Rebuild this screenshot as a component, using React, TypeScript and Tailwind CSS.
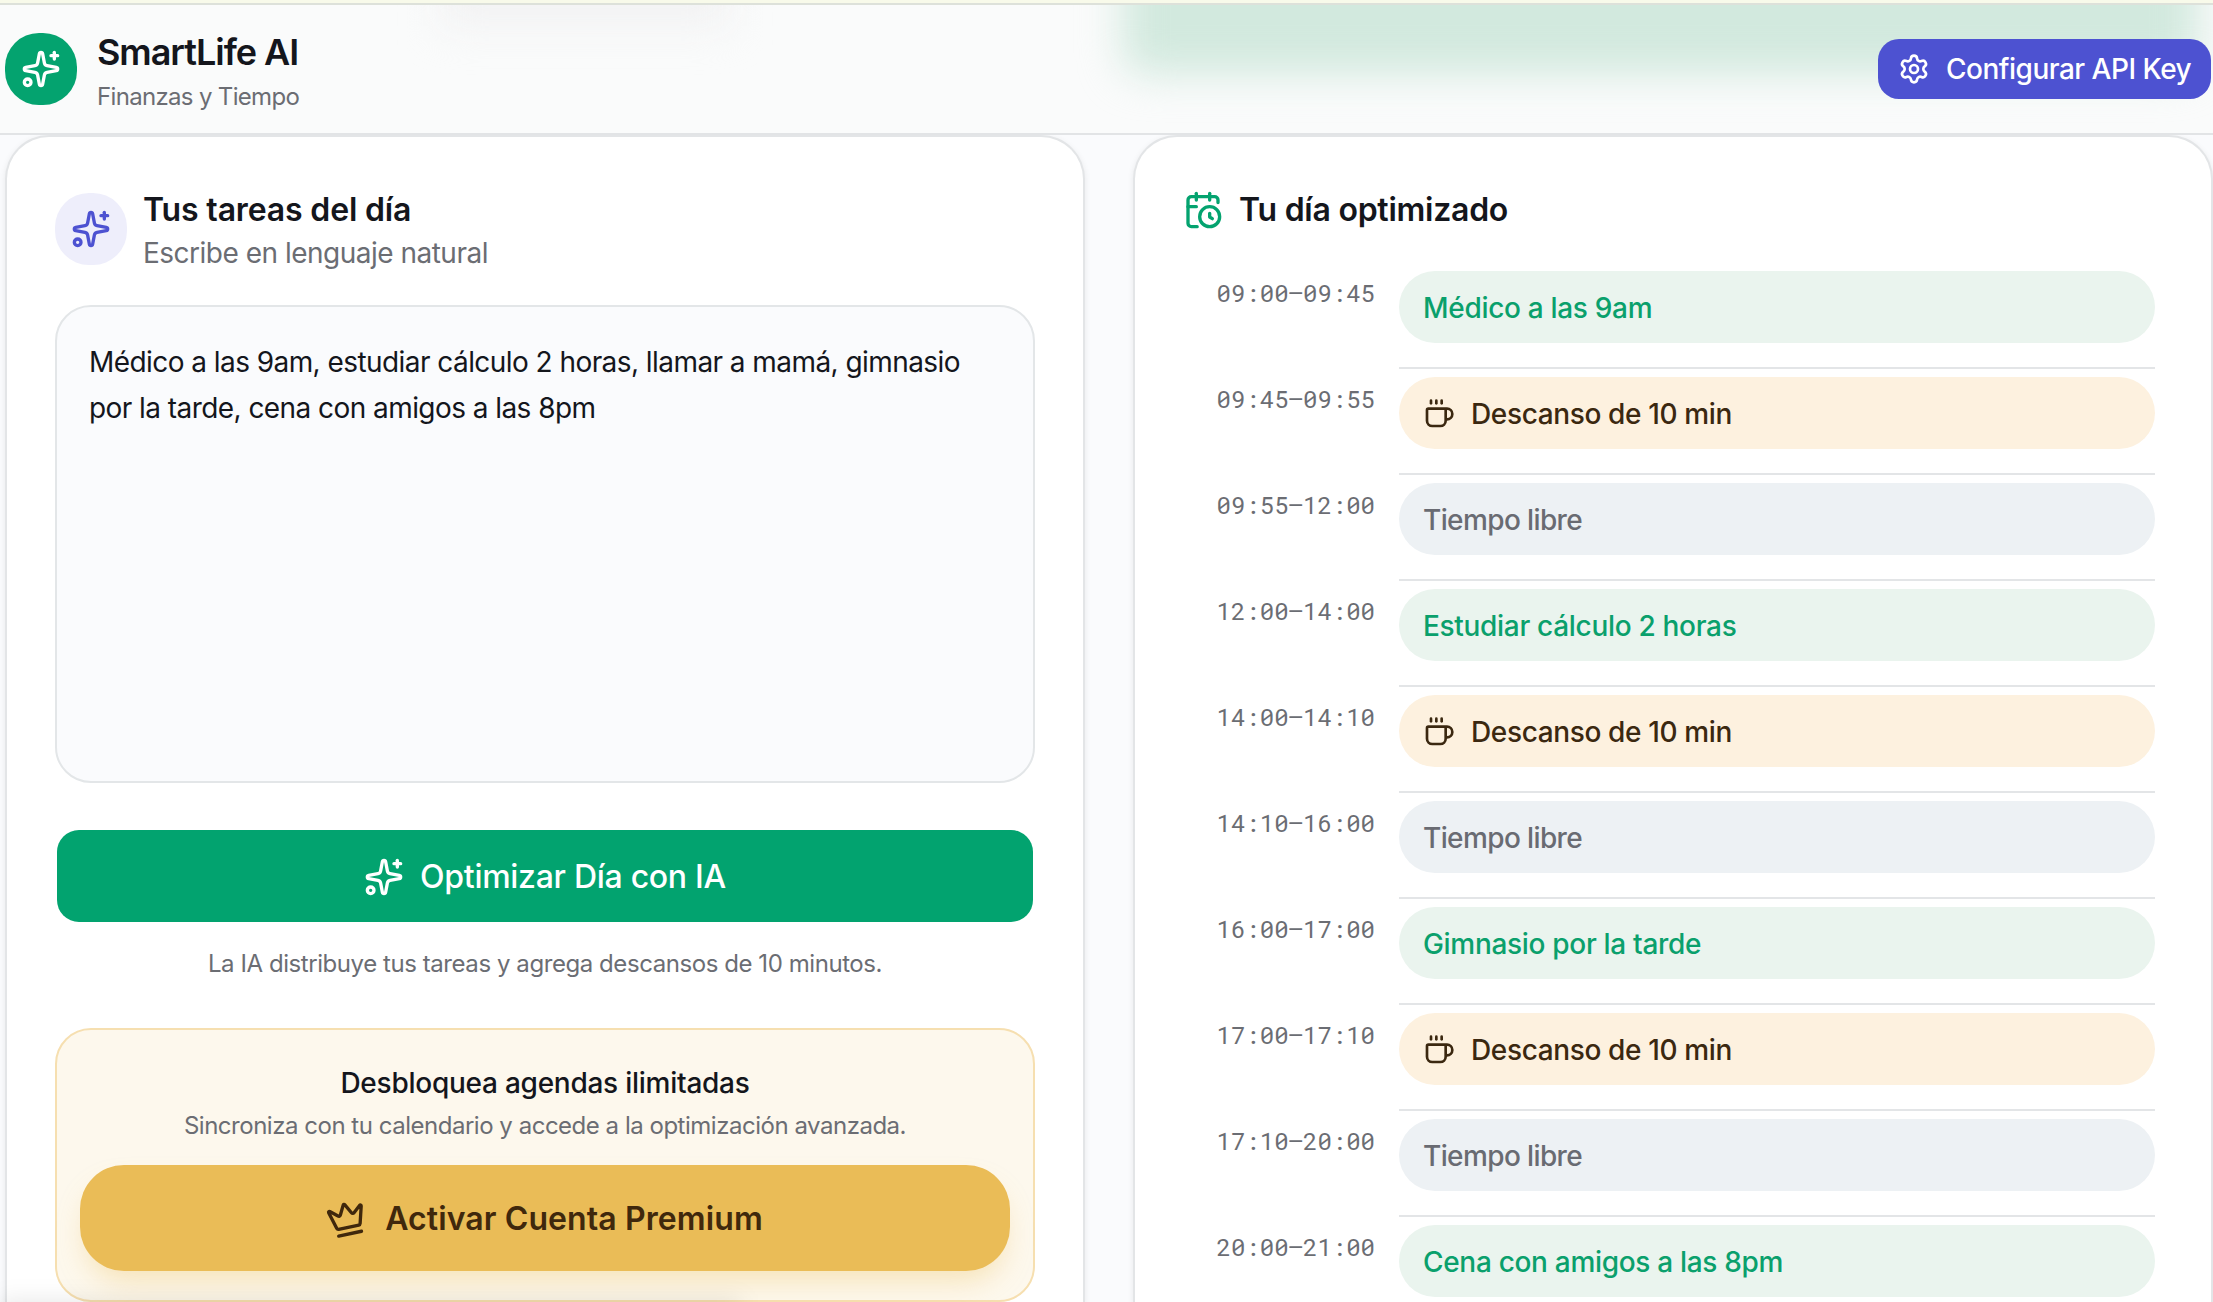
import React from "react"
import clsx from "clsx"
import { CalendarClock, Coffee, Crown, Settings, Sparkles } from "lucide-react"

type SlotKind = "task" | "break" | "free"

const scheduleData: { time: string; label: string; kind: SlotKind }[] = [
    { time: "09:00–09:45", label: "Médico a las 9am", kind: "task" },
    { time: "09:45–09:55", label: "Descanso de 10 min", kind: "break" },
    { time: "09:55–12:00", label: "Tiempo libre", kind: "free" },
    { time: "12:00–14:00", label: "Estudiar cálculo 2 horas", kind: "task" },
    { time: "14:00–14:10", label: "Descanso de 10 min", kind: "break" },
    { time: "14:10–16:00", label: "Tiempo libre", kind: "free" },
    { time: "16:00–17:00", label: "Gimnasio por la tarde", kind: "task" },
    { time: "17:00–17:10", label: "Descanso de 10 min", kind: "break" },
    { time: "17:10–20:00", label: "Tiempo libre", kind: "free" },
    { time: "20:00–21:00", label: "Cena con amigos a las 8pm", kind: "task" },
]

const slotStyles: Record<SlotKind, string> = {
    task: "bg-[#eaf4ee] text-[#0aa06c] tracking-[-0.011em]",
    break: "bg-[#fdf1df] text-[#3b2810] tracking-[-0.013em]",
    free: "bg-[#edf1f4] text-[#696b72] tracking-[-0.022em]",
}

function Header() {
    return (
        <header className="relative h-[135px] shrink-0 overflow-hidden border-b-2 border-[#e2e4e6] bg-[#fafbfb]">
            {/* content scrolled under the frosted bar */}
            <div className="absolute -top-16 left-[1122px] h-[138px] w-[1076px] rounded-3xl bg-[#d2e9de] blur-[20px]"></div>
            <div className="absolute -top-16 left-[440px] h-[90px] w-[290px] bg-[#f2f2f3] blur-[20px]"></div>
            <div className="relative h-[5px] border-b-2 border-[#dde1da] bg-[#f8faea]"></div>

            <div className="relative flex h-32 items-center justify-between pr-[2px] pl-[5px]">
                <div className="flex items-center gap-5">
                    <div className="flex size-[72px] items-center justify-center rounded-[34px] bg-[#04a36f] text-white">
                        <Sparkles className="size-10" />
                    </div>
                    <div className="pt-[7px]">
                        <h1 className="text-[36px] leading-[49px] font-semibold tracking-[-0.029em] text-[#14161c]">SmartLife AI</h1>
                        <p className="text-[24px] leading-[40px] tracking-[-0.028em] text-[#6b6d73]">Finanzas y Tiempo</p>
                    </div>
                </div>
                <button className="flex h-[60px] w-[333px] items-center gap-4 rounded-[21px] bg-[#4d52d1] pl-5 text-[28px] font-medium tracking-[-0.018em] whitespace-nowrap text-white">
                    <Settings className="size-8 shrink-0" />
                    Configurar API Key
                </button>
            </div>
        </header>
    )
}

function TasksCard() {
    return (
        <section className="flex w-[1080px] flex-col rounded-t-[44px] border-2 border-b-0 border-[#e3e5e7] bg-white p-12 pb-0 shadow-[0_2px_6px_rgba(0,0,0,0.08)]">
            <div className="flex items-center gap-4">
                <div className="flex size-[72px] items-center justify-center rounded-[34px] bg-[#eeeefb] text-[#4d52d1]">
                    <Sparkles className="size-10" />
                </div>
                <div>
                    <h2 className="text-[32px] leading-[49px] font-semibold tracking-[-0.005em] text-[#14161c]">Tus tareas del día</h2>
                    <p className="text-[28px] leading-[39px] tracking-[-0.018em] text-[#6b6d73]">Escribe en lenguaje natural</p>
                </div>
            </div>

            <div className="mt-8 h-[478px] rounded-[36px] border-2 border-[#e3e6e8] bg-[#fafbfd] px-8 py-8 text-[28px] leading-[46px] tracking-[-0.02em] text-[#14161c]">
                Médico a las 9am, estudiar cálculo 2 horas, llamar a mamá, gimnasio
                <br />
                por la tarde, cena con amigos a las 8pm
            </div>

            <button className="mx-0.5 mt-[47px] flex h-[92px] shrink-0 items-center justify-center gap-4 rounded-[22px] bg-[#02a36f] pt-px text-[32px] font-medium tracking-[-0.009em] text-white">
                <Sparkles className="size-10" />
                Optimizar Día con IA
            </button>
            <p className="mt-[26px] text-center text-[24px] leading-8 tracking-[-0.018em] text-[#6b6d73]">
                La IA distribuye tus tareas y agrega descansos de 10 minutos.
            </p>

            <div className="mt-12 h-[274px] shrink-0 rounded-[36px] border-2 border-[#f6dfb0] bg-[#fdf8ed] px-[23px] pt-8 text-center">
                <p className="text-[28px] leading-[42px] font-medium tracking-[-0.009em] text-[#14161c]">Desbloquea agendas ilimitadas</p>
                <p className="mt-0.5 text-[24px] leading-[40px] tracking-[-0.02em] text-[#6b6d73]">
                    Sincroniza con tu calendario y accede a la optimización avanzada.
                </p>
                <button className="mt-[19px] flex h-[106px] w-full items-center justify-center gap-[18px] rounded-[44px] bg-[#eabc57] pt-px text-[32px] font-semibold tracking-[0.003em] text-[#40280c] shadow-[0_16px_28px_-6px_rgba(234,188,87,0.35)]">
                    <Crown className="size-10 -rotate-12" />
                    Activar Cuenta Premium
                </button>
            </div>
        </section>
    )
}

function ScheduleCard() {
    return (
        <section className="w-[1080px] rounded-t-[44px] border-2 border-b-0 border-[#e3e5e7] bg-white p-12 pb-0 shadow-[0_2px_6px_rgba(0,0,0,0.08)]">
            <div className="flex items-center gap-4">
                <CalendarClock className="size-10 text-[#04a36f]" />
                <h2 className="text-[32px] leading-[49px] font-semibold tracking-[-0.008em] text-[#14161c]">Tu día optimizado</h2>
            </div>

            <div className="mt-[29px] pr-2">
                {scheduleData.map((slot) => (
                    <div key={slot.time} className="flex gap-6">
                        <div className="w-48 pt-[14px] text-right font-['Roboto_Mono','Liberation_Mono',monospace] text-[24px] leading-8 text-[#6b6d73]">
                            {slot.time}
                        </div>
                        <div className="flex-1 border-b-2 border-[#e3e5e7] pt-2 pb-6">
                            <div className={clsx("flex h-[72px] items-center gap-4 rounded-[36px] px-6 pt-px text-[28px] font-medium", slotStyles[slot.kind])}>
                                {slot.kind === "break" && <Coffee className="size-8" />}
                                {slot.label}
                            </div>
                        </div>
                    </div>
                ))}
            </div>
        </section>
    )
}

export default function App() {
    return (
        <div className="relative flex h-[1302px] w-[2213px] flex-col overflow-hidden bg-[#fafbfd] font-['Inter',sans-serif]">
            <Header />
            <main className="flex min-h-0 flex-1 gap-12 pl-[5px]">
                <TasksCard />
                <ScheduleCard />
            </main>
            {/* soft shade along the bottom edge */}
            <div className="absolute -bottom-10 left-0 h-10 w-[740px] bg-black/10 blur-[12px]"></div>
        </div>
    )
}
